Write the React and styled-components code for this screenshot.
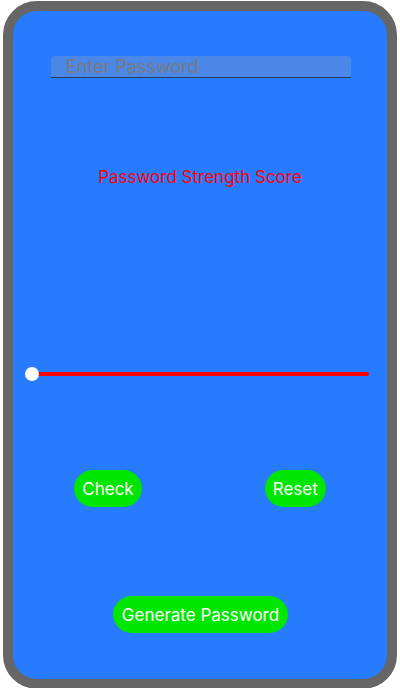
import React from "react";
import styled, { createGlobalStyle } from "styled-components";

const Global = createGlobalStyle`
  html, body { margin: 0; padding: 0; background: #fff; }
  body { font-family: Inter, "Noto Sans", Roboto, sans-serif; }
`;

const Frame = styled.div`
  box-sizing: border-box;
  width: 394px;
  height: 688px;
  margin: 1px 3px 0;
  border: 10px solid #666666;
  border-radius: 34px;
  background: #277bff;
  display: flex;
  flex-direction: column;
  align-items: stretch;
  overflow: hidden;
`;

const InputWrap = styled.div`
  margin: 45px 0 0 38px;
  width: 300px;
`;

const Field = styled.input`
  box-sizing: border-box;
  width: 300px;
  height: 22px;
  border: none;
  border-bottom: 1px solid #2b3c5a;
  border-radius: 4px 4px 0 0;
  background: #4b87e6;
  padding: 0 0 0 15px;
  font-family: Inter, "Noto Sans", sans-serif;
  font-size: 18px;
  color: #222;
  outline: none;
  &::placeholder { color: #7a7a80; }
`;

const Title = styled.div`
  margin-top: 88px;
  text-align: center;
  color: #ff0000;
  font-size: 17px;
  line-height: 22px;
`;

const SliderRow = styled.div`
  position: relative;
  margin: 178px 18px 0 12px;
  height: 16px;
`;

const Track = styled.div`
  position: absolute;
  left: 7px;
  right: 0;
  top: 6px;
  height: 4px;
  border-radius: 2px;
  background: #ff0000;
`;

const Thumb = styled.div`
  position: absolute;
  left: 0;
  top: 1px;
  width: 14px;
  height: 14px;
  border-radius: 50%;
  background: #ffffff;
`;

const ButtonRow = styled.div`
  display: flex;
  justify-content: center;
  gap: 123px;
  margin-top: 88px;
`;

const Pill = styled.button`
  height: 37px;
  padding: 0 ${(p) => (p.$wide ? 9 : 8)}px;
  border: none;
  border-radius: 19px;
  background: #00e600;
  color: #ffffff;
  font-family: Inter, "Noto Sans", sans-serif;
  font-size: 17px;
  cursor: pointer;
`;

const BottomRow = styled.div`
  display: flex;
  justify-content: center;
  margin-top: 89px;
  padding-left: 1px;
`;

export default function App() {
  return (
    <>
      <Global />
      <Frame>
        <InputWrap>
          <Field placeholder="Enter Password" />
        </InputWrap>
        <Title>Password Strength Score</Title>
        <SliderRow>
          <Track />
          <Thumb />
        </SliderRow>
        <ButtonRow>
          <Pill>Check</Pill>
          <Pill>Reset</Pill>
        </ButtonRow>
        <BottomRow>
          <Pill $wide>Generate Password</Pill>
        </BottomRow>
      </Frame>
    </>
  );
}
